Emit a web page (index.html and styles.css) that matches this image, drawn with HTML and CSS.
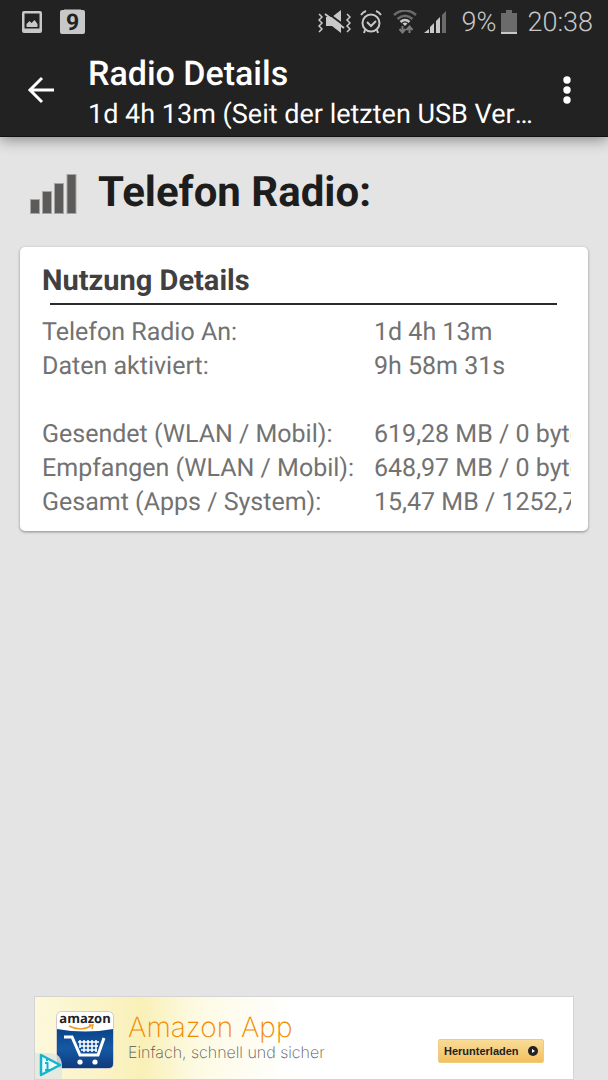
FILE: index.html
```html
<!DOCTYPE html>
<html lang="de">
<head>
<meta charset="utf-8">
<meta name="viewport" content="width=device-width, initial-scale=1">
<title>Radio Details</title>
<link rel="stylesheet" href="styles.css">
</head>
<body>
<header class="top">
  <div class="status">
    <svg class="status-picture" width="20" height="22" viewBox="0 0 20 22" aria-hidden="true">
      <path fill="#c8c8c8" fill-rule="evenodd" d="M2 0h16q2 0 2 2v18q0 2-2 2H2q-2 0-2-2V2q0-2 2-2zM2.500 2.500v15h15v-15z"/>
      <path fill="#c8c8c8" d="M4.500 16v-3l3-3 2 2 3-3 3 4v3z"/>
    </svg>
    <div class="status-nine">9</div>
    <div class="status-right">
      <svg width="33" height="24" viewBox="0 0 33 24" aria-hidden="true">
        <path fill="#c8c8c8" d="M8 7h6l9-7v23l-9-7H8z"/>
        <path d="M9 2.500l18 13.500" stroke="#222" stroke-width="2"/>
        <path d="M7 4l19 14" stroke="#c8c8c8" stroke-width="2"/>
        <path d="M1 4l3 3-3 3 3 3-3 3 3 3-3 3M29 4l3 3-3 3 3 3-3 3 3 3-3 3" fill="none" stroke="#c8c8c8" stroke-width="1.500"/>
      </svg>
      <svg width="22" height="24" viewBox="0 0 22 24" fill="none" stroke="#c8c8c8" stroke-width="2" aria-hidden="true">
        <circle cx="11" cy="13" r="8.500"/>
        <path d="M7 12l4 4 5-5M1 5q2-3 5-4M21 5q-2-3-5-4M5 20l-1 3M17 20l1 3"/>
      </svg>
      <svg class="wifi" width="24" height="24" viewBox="0 0 24 24" fill="none" aria-hidden="true">
        <path d="M1 5q11-9 22 0M4.500 9q7.500-6.500 15 0" stroke="#6b6b6b" stroke-width="2.500"/>
        <path d="M7.500 12q4.500-4 9 0" stroke="#c8c8c8" stroke-width="2.500"/>
        <path d="M9.500 13.500q2.500-2 5 0L12 16z" fill="#c8c8c8"/>
        <path d="M9.500 16v6M6.500 19l3 3.500 3-3.500M16.500 23v-6M13.500 20l3-3.500 3 3.500" stroke="#7a7a7a" stroke-width="2"/>
      </svg>
      <svg width="23" height="24" viewBox="0 0 23 24" aria-hidden="true">
        <path fill="#c8c8c8" d="M0 23l5-4v4zM6 17l4-4v10H6zM12 11l4-4v16h-4z"/>
        <path fill="#6b6b6b" d="M18 5l4-4v22h-4z"/>
      </svg>
      <span class="percent">9%</span>
      <svg class="battery" width="16" height="24" viewBox="0 0 16 24" aria-hidden="true">
        <path fill="#6b6b6b" d="M5 0h6v3h5v19H0V3h5z"/><path fill="#c8c8c8" d="M0 22h16v2H0z"/>
      </svg>
      <span class="clock">20:38</span>
    </div>
  </div>
  <div class="toolbar">
    <button class="icon-button back" aria-label="Zurück">
      <svg width="28" height="28" viewBox="0 0 28 28" fill="none" stroke="#fff" stroke-width="3" aria-hidden="true"><path d="M27 14H2M15 2L3 14l12 12"/></svg>
    </button>
    <div class="titles">
      <h1 class="title">Radio Details</h1>
      <p class="subtitle">1d 4h 13m (Seit der letzten USB Verbindung)</p>
    </div>
    <button class="icon-button more" aria-label="Weitere Optionen">
      <svg width="8" height="28" viewBox="0 0 8 28" fill="#fff" aria-hidden="true"><circle cx="4" cy="4" r="3.700"/><circle cx="4" cy="14" r="3.700"/><circle cx="4" cy="24" r="3.700"/></svg>
    </button>
  </div>
</header>
<main class="content">
  <div class="heading">
    <svg width="48" height="42" viewBox="0 0 48 42" fill="#5c5b5a" stroke="#a5a5a5" stroke-width="1" aria-hidden="true">
      <rect x=".5" y="27.500" width="9" height="14"/><rect x="12.500" y="19.500" width="9" height="22"/><rect x="24.500" y="11.500" width="9" height="30"/><rect x="37" y="2.500" width="9" height="39"/>
    </svg>
    <h2 class="heading-text">Telefon Radio:</h2>
  </div>
  <section class="card">
    <h3 class="card-title">Nutzung Details</h3>
    <hr class="rule">
    <table class="details">
      <tr><th scope="row">Telefon Radio An:</th><td>1d 4h 13m</td></tr>
      <tr><th scope="row">Daten aktiviert:</th><td>9h 58m 31s</td></tr>
      <tr class="spacer"><td colspan="2"></td></tr>
      <tr><th scope="row">Gesendet (WLAN / Mobil):</th><td>619,28 MB / 0 bytes</td></tr>
      <tr><th scope="row">Empfangen (WLAN / Mobil):</th><td>648,97 MB / 0 bytes</td></tr>
      <tr><th scope="row">Gesamt (Apps / System):</th><td>15,47 MB / 1252,78 MB</td></tr>
    </table>
  </section>
</main>
<aside class="ad">
  <svg class="ad-logo" width="58" height="58" viewBox="0 0 58 58" aria-hidden="true">
    <defs><linearGradient id="blue" x2="0" y2="1"><stop offset="0" stop-color="#0b4389"/><stop offset=".5" stop-color="#1559a4"/><stop offset="1" stop-color="#103a7c"/></linearGradient></defs>
    <rect x=".5" y=".5" width="57" height="57" rx="5" fill="#fff" stroke="#ccc"/>
    <path d="M1 18q28 5 56 0v35q0 4-4 4H5q-4 0-4-4z" fill="url(#blue)"/>
    <text class="logo-text" x="29" y="12" text-anchor="middle">amazon</text>
    <path d="M13 15q12 6 22 0M33 14h4l-1 4" fill="none" stroke="#f29b22" stroke-width="1.500"/>
    <path d="M8 26h8l8 18h18l6-17" fill="none" stroke="#fff" stroke-width="3"/>
    <path d="M22 31h21M24 35h18M25 39h16M24 29v8M28 29v12M32 29v12M36 29v12M40 29v12" stroke="#fff" stroke-width="1.500"/>
    <circle cx="24" cy="51" r="2.600" fill="#fff"/><circle cx="39" cy="51" r="2.600" fill="#fff"/>
  </svg>
  <svg class="ad-choices" width="28" height="28" viewBox="0 0 28 28" aria-hidden="true">
    <path d="M0 2h15q12 0 12 14v12H0z" fill="#e3e6e1" opacity=".85"/>
    <path d="M6 4v20l19-10z" fill="#eff" stroke="#12b5cb" stroke-width="2.500" stroke-linejoin="round"/>
    <path d="M12 8v2M10 12h2.500v7M10 19h5" fill="none" stroke="#12b5cb" stroke-width="2"/>
  </svg>
  <div class="ad-copy">
    <div class="ad-title">Amazon App</div>
    <div class="ad-text">Einfach, schnell und sicher</div>
  </div>
  <button class="ad-button">Herunterladen
    <svg width="10" height="10" viewBox="0 0 10 10" aria-hidden="true"><circle cx="5" cy="5" r="5" fill="#222"/><path d="M4 3l3 2-3 2z" fill="#fff"/></svg>
  </button>
</aside>
</body>
</html>
```
FILE: styles.css
```css
* { box-sizing: border-box; }
body {
  margin: 0;
  min-height: 100vh;
  display: flex;
  flex-direction: column;
  background: #e4e4e4;
  font-family: Roboto, sans-serif;
  text-rendering: geometricPrecision;
}
h1, h2, h3, p { margin: 0; }
svg { display: block; flex: none; }
button { border: 0; cursor: pointer; }

.top { background: #222; color: #fff; border-bottom: 1px solid #111; box-shadow: 0 2px 14px rgba(0, 0, 0, .45); }
.status { display: flex; align-items: center; height: 43px; padding: 0 15px 0 22px; color: #c8c8c8; }
.status-nine {
  width: 25px; height: 24px; margin-left: 18px;
  background: #c8c8c8; color: #222; border-radius: 2px;
  box-shadow: 0 -5px 0 -4px #777;
  font-size: 23px; line-height: 25px; font-weight: 700; text-align: center;
}
.status-right { display: flex; align-items: center; margin-left: auto; font-size: 27px; line-height: 44px; font-weight: 300; }
.status-right svg + svg { margin-left: 9px; }
.status-right .wifi + svg { margin-left: 7px; }
.status-right svg + .wifi { margin-left: 11px; }
.percent { margin-left: 14px; }
.status-right .battery { margin-left: 5px; }
.clock { margin-left: 10px; }

.toolbar { display: flex; align-items: center; height: 93px; }
.icon-button { display: flex; align-items: center; justify-content: center; height: 80px; padding: 0; background: none; }
.back { width: 81px; flex: none; }
.more { width: 66px; flex: none; margin: 0 8px 0 auto; }
.titles { flex: 1; min-width: 0; padding: 8px 0 0 7px; }
.title { font-size: 34px; line-height: 40px; font-weight: 500; }
.subtitle { font-size: 27px; line-height: 40px; white-space: nowrap; overflow: hidden; text-overflow: ellipsis; }

.content { flex: 1; padding: 26px 20px 40px; }
.heading { display: flex; align-items: center; gap: 20px; padding-left: 10px; }
.heading-text { font-size: 42px; line-height: 60px; font-weight: 700; color: #1d1d1d; }
.card { margin-top: 24px; padding: 16px 14px 11px 22px; background: #fff; border-radius: 5px; box-shadow: 0 1px 3px rgba(0, 0, 0, .4); }
.card-title { font-size: 29px; line-height: 36px; font-weight: 700; color: #404040; }
.rule { height: 2px; margin: 4px 17px 11px 8px; border: 0; background: #2b2b2b; }
.details { width: 100%; table-layout: fixed; border-collapse: collapse; color: #727272; font-size: 25px; line-height: 34px; }
.details th, .details td { padding: 0; text-align: left; font-weight: 400; white-space: nowrap; overflow: hidden; }
.details th { width: 332px; }
.details td { padding-right: 3px; overflow: clip; overflow-clip-margin: content-box; }
.details .spacer td { height: 34px; }

.ad {
  position: relative;
  display: flex; align-items: center;
  width: calc(100% - 68px); height: 84px; margin: 0 auto;
  padding: 0 29px 0 21px;
  border: 1px solid #d4d4d4;
  background: linear-gradient(90deg, #fcf8dc, #f9f0b8 20%, #fdfae3 30%, #fff 48%);
}
.ad-logo { margin-top: 4px; }
.logo-text { font: 700 13px "Open Sans", sans-serif; fill: #222; }
.ad-choices { position: absolute; left: 0; bottom: 0; }
.ad-copy { margin: 0 0 2px 14px; font-family: Inter, sans-serif; white-space: nowrap; }
.ad-title { font-size: 28px; line-height: 30px; font-weight: 200; color: #f18a00; }
.ad-text { font-size: 16px; line-height: 20px; font-weight: 200; color: #555; }
.ad-button {
  display: flex; align-items: center; justify-content: space-between;
  width: 106px; height: 24px; margin: 25px 0 0 auto; padding: 0 5px;
  background: linear-gradient(#f8dc98, #f3c05f); border-radius: 2px; border: 1px solid #efcb80;
  font: 700 11px "Liberation Sans", sans-serif; color: #222;
}
```
